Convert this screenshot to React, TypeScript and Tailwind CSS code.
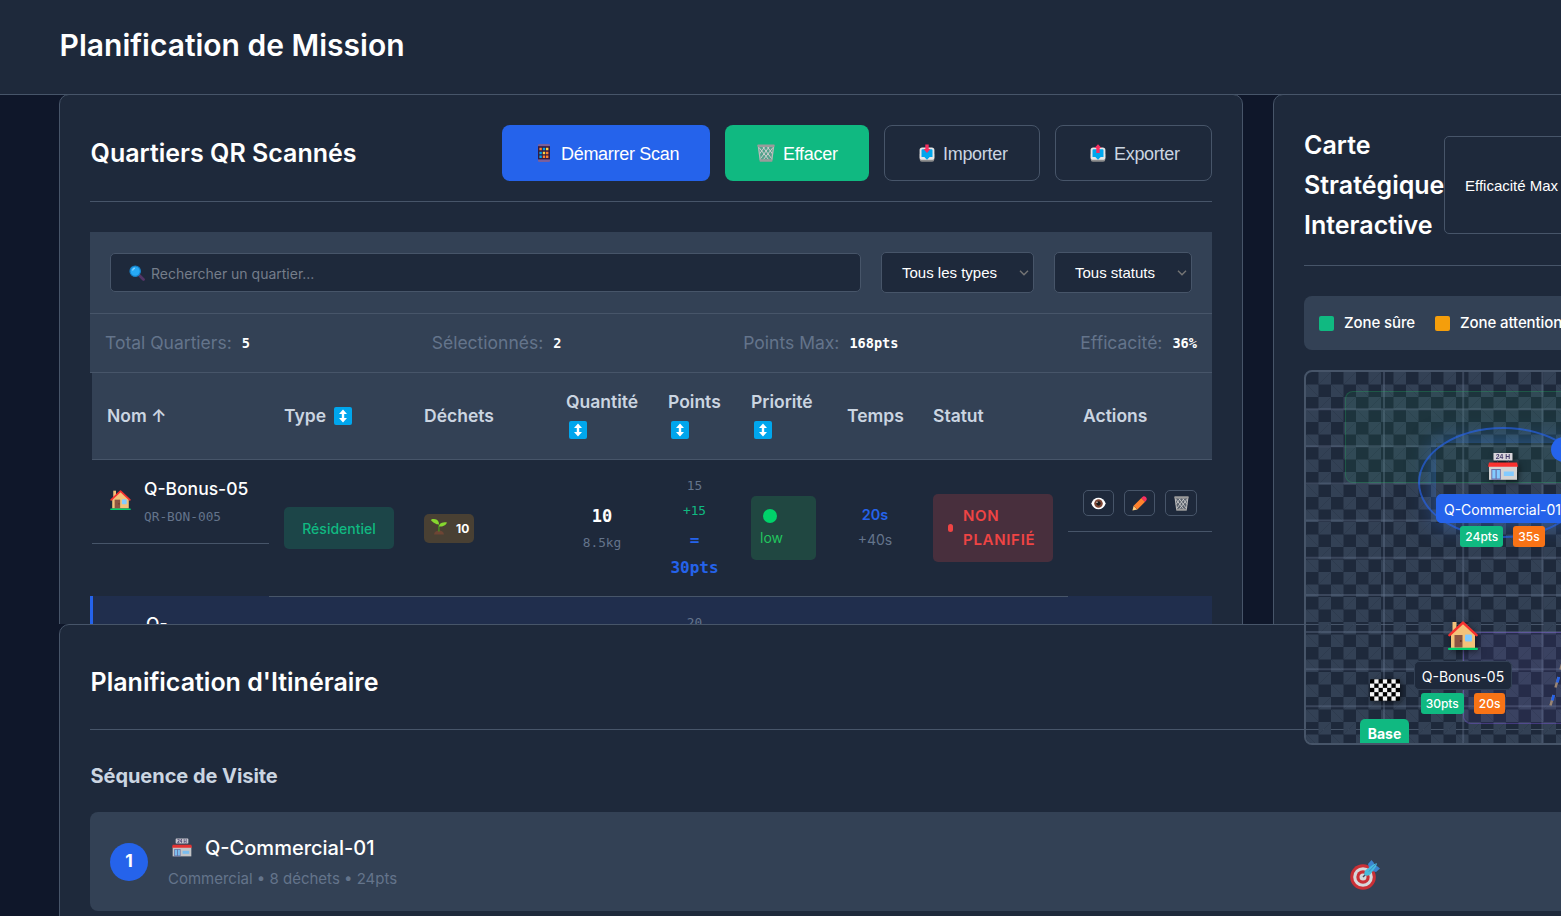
import type { ReactNode } from "react";

type IconProps = { className?: string };

function House({ className }: IconProps) {
  return (
    <svg viewBox="0 0 30 29" className={className}>
      <path d="M4.500 1h4v9h-4z" fill="#f3c27a" />
      <path d="M3 13 15 2l12 11v14H3z" fill="#f3c27a" />
      <path d="M1.500 14.200 15 1.600l13.500 12.600" fill="none" stroke="#f8312f" strokeWidth="2.500" strokeLinecap="round" strokeLinejoin="round" />
      <path d="M6.500 14h8v12.500h-8z" fill="#8b5542" />
      <circle cx="12.800" cy="20" r="0.900" fill="#5c2f22" />
      <rect x="17" y="13.500" width="7" height="7" rx="1" fill="#83cbff" />
      <rect x="0" y="26.800" width="30" height="2.100" rx="1" fill="#00d26a" />
    </svg>
  );
}

function Store({ className }: IconProps) {
  return (
    <svg viewBox="0 0 30 27" className={className}>
      <rect x="5.500" y="0" width="19" height="7.500" rx="0.600" fill="#d9d6dc" />
      <text x="15" y="6.200" textAnchor="middle" fontSize="6.800" fontWeight="700" fontFamily="Liberation Sans, sans-serif" fill="#433b6b">24 H</text>
      <path d="M9.500 7.500v2M20.500 7.500v2" stroke="#433b6b" strokeWidth="0.800" />
      <rect x="1" y="12" width="28" height="14.800" fill="#d3d3d3" />
      <path d="M1 9.500h28l1 4.300H0z" fill="#f8312f" />
      <rect x="3.300" y="16" width="9.500" height="10.800" fill="#6a6fa8" />
      <path d="M4.300 17h3.200v8.500H4.300zM8.700 17h3.200v8.500H8.700z" fill="#83cbff" />
      <rect x="15.800" y="18.500" width="10" height="4.500" fill="#83cbff" />
    </svg>
  );
}

function Magnifier({ className }: IconProps) {
  return (
    <svg viewBox="0 0 16 16" className={className}>
      <path d="m9.500 9.500 5 5" stroke="#533566" strokeWidth="2.800" strokeLinecap="round" />
      <circle cx="6.200" cy="6.200" r="5.200" fill="#26a9f5" stroke="#1680c7" strokeWidth="1.200" />
      <path d="M3.500 5.500c.3-1.300 1.200-2 2.400-2.300" stroke="#8ad4ff" strokeWidth="1.200" fill="none" />
    </svg>
  );
}

function Phone({ className }: IconProps) {
  return (
    <svg viewBox="0 0 12 18" className={className}>
      <rect width="12" height="18" rx="1.300" fill="#7a5f9c" />
      <rect y="2.200" width="12" height="13.200" fill="#321b41" />
      <path d="M1.400 3.800h2.400v2.400H1.400zM8 7.800h2.400v2.400H8zM4.800 11.500h2.400v2.400H4.800zM8 11.500h2.400v2.400H8z" fill="#ff822d" />
      <path d="M4.800 3.800h2.400v2.400H4.800zM1.400 7.800h2.400v2.400H1.400zM1.400 11.500h2.400v2.400H1.400z" fill="#00a6ed" />
      <path d="M8 3.800h2.400v2.400H8zM4.800 7.800h2.400v2.400H4.800z" fill="#fcd53f" />
    </svg>
  );
}

function Trash({ className }: IconProps) {
  return (
    <svg viewBox="0 0 18 18" className={className}>
      <path d="M1.300 2.500h15.400L15 16H3z" fill="#8b8f96" fillOpacity=".55" />
      <path d="m2 3.500 9.500 12M6 3l8.500 11.500M10.500 3l5 7M16 3.500 6.500 15.500M12 3 3.600 14.500M7.500 3l-5 7" stroke="#cfcfcf" strokeWidth="1" />
      <path d="m1.400 2.500 1.800 13.500M16.600 2.500l-1.800 13.500" stroke="#b9b9b9" strokeWidth="1.300" />
      <rect x="0.300" y="0.400" width="17.400" height="2.500" rx="0.800" fill="#9b9b9b" />
      <rect x="2.500" y="15.200" width="13" height="2.500" rx="0.900" fill="#9b9b9b" />
    </svg>
  );
}

function Tray({ className, up }: IconProps & { up?: boolean }) {
  return (
    <svg viewBox="0 0 16 18" className={className}>
      <path d="M.7 10v5.500A2.200 2.200 0 0 0 2.900 17.700h10.200a2.200 2.200 0 0 0 2.200-2.200V10z" fill="#8d8d8d" />
      <rect x="0.600" y="3.500" width="14.800" height="12.300" rx="2.600" fill="#e6e6e6" />
      <path d="M3.500 5.200h9a1 1 0 0 1 1 1V13h-2.800L8 15.800 5.300 13H2.500V6.200a1 1 0 0 1 1-1z" fill="#00a6ed" />
      {up ? (
        <path d="M8 .3 11.500 4H9.700v5H6.300V4H4.500z" fill="#f92f60" />
      ) : (
        <path d="M6.300.5h3.400V5h1.800L8 9 4.500 5h1.800z" fill="#f92f60" />
      )}
    </svg>
  );
}

function SortIcon({ className }: IconProps) {
  return (
    <svg viewBox="0 0 18 18" className={className}>
      <rect width="18" height="18" rx="2" fill="#00a6ed" />
      <path d="M9 2.500 13 7h-2.800v4H13l-4 4.500L5 11h2.800V7H5z" fill="#fff" />
    </svg>
  );
}

function Sprout({ className }: IconProps) {
  return (
    <svg viewBox="0 0 16 16" className={className}>
      <path d="M3 15.500c.5-3 2.500-4 5-4s4.500 1 5 4z" fill="#6d4534" />
      <path d="M7.900 12.500V6.500" stroke="#44911b" strokeWidth="1.400" />
      <path d="M8 5.500C6 5.500 4 5 .3 1.800-.1.300.8 0 3 .1 6.500.3 8 2.500 8 5.500z" fill="#86d72f" />
      <path d="M8 7.500c0-3 3-4.300 7.800-4.200C15.500 6 12 8 8 7.500z" fill="#86d72f" />
    </svg>
  );
}

function Eye({ className }: IconProps) {
  return (
    <svg viewBox="0 0 16 14" className={className}>
      <path d="M.3 7C1.500 2.800 4.500.8 8 .8s6.500 2 7.700 6.200C14.500 11.200 11.500 13.200 8 13.200S1.500 11.200.3 7z" fill="#fff" />
      <circle cx="8" cy="7" r="4.600" fill="#7d4533" />
      <circle cx="8" cy="7" r="2.300" fill="#1c1c1c" />
      <circle cx="6.400" cy="5.600" r="0.800" fill="#e8dcd8" />
    </svg>
  );
}

function Pencil({ className }: IconProps) {
  return (
    <svg viewBox="0 0 16 16" className={className}>
      <path d="m.5 15.500 1.200-5 4 3.800z" fill="#ffce7c" />
      <path d="M1.700 10.500 10 2.100l4 4-8.300 8.200z" fill="#ff822d" />
      <path d="M10 2.100c1.800-2.200 3.300-2.300 4.700-1 1.500 1.400 1.500 2.900-.7 5z" fill="#f92f60" />
    </svg>
  );
}

function Checkered({ className }: IconProps) {
  const cells: ReactNode[] = [];
  for (let r = 0; r < 5; r++)
    for (let c = 0; c < 7; c++)
      if ((r + c) % 2 === 1)
        cells.push(<rect key={r + "-" + c} x={c * 4.3} y={r * 4.3} width="4.3" height="4.3" fill="#f4f4f4" />);
  return (
    <svg viewBox="0 0 30.1 21.5" className={className}>
      <rect width="30.1" height="21.5" rx="1" fill="#000" />
      {cells}
    </svg>
  );
}

function Target({ className }: IconProps) {
  return (
    <svg viewBox="0 0 30 30" className={className}>
      <circle cx="13" cy="17" r="12.800" fill="#ca3036" />
      <circle cx="13" cy="17" r="9.800" fill="#d5d8db" />
      <circle cx="13" cy="17" r="6.700" fill="#ca3036" />
      <circle cx="13" cy="17" r="3.500" fill="#d5d8db" />
      <path d="m13 17 3-3" stroke="#3b4a66" strokeWidth="1.500" />
      <path d="M19.500 9.500 18 4l3.500-4 2.500 3-.5 3zM20.500 10.500l5.500 1.500 4-3.500-3-2.500-3.500.8z" fill="#3c85cf" />
      <path d="M14.500 15c-.5-2.500 0-4 1.500-5.200l8-5.800 3-.8-.8 3-5.700 8c-1.500 1.500-3.500 2-6 .8z" fill="#47bddc" />
      <path d="m19 11.500 7-7.500" stroke="#3c85cf" strokeWidth="1" />
    </svg>
  );
}

function Chevron() {
  return (
    <svg viewBox="0 0 10 6" className="h-[6px] w-[10px] shrink-0">
      <path d="m1 .8 4 4 4-4" fill="none" stroke="#757575" strokeWidth="1.400" />
    </svg>
  );
}

const mono = "font-['DejaVu_Sans_Mono',monospace]";
const tableCols = "grid grid-cols-[177px_140px_142px_102px_83px_96px_86px_150px_144px]";

function Button({ className, icon, children }: { className: string; icon: ReactNode; children: ReactNode }) {
  return (
    <button className={`flex h-14 shrink-0 items-center rounded-[8px] font-['Liberation_Sans',Arial,sans-serif] text-[18px] tracking-[-0.300px] whitespace-nowrap ${className}`}>
      {icon}
      <span className="pt-[2px]">{children}</span>
    </button>
  );
}

function Select({ className, children }: { className: string; children: ReactNode }) {
  return (
    <div className={`flex h-[41px] items-center justify-between rounded-[5px] border border-[#475569] bg-[#1e293b] pr-[4px] pl-5 font-['Liberation_Sans',Arial,sans-serif] text-[15px] text-white ${className}`}>
      <span className="pt-[2px]">{children}</span>
      <Chevron />
    </div>
  );
}

function Stat({ label, value }: { label: string; value: string }) {
  return (
    <div className="flex items-center gap-[10px]">
      <span className="text-[17.5px] text-[#64748b]">{label}</span>
      <span className={`text-[13.6px] font-bold text-white ${mono}`}>{value}</span>
    </div>
  );
}

function Th({ children, sort, stacked }: { children: ReactNode; sort?: boolean; stacked?: boolean }) {
  return (
    <div className={stacked ? "flex flex-col justify-center gap-0 pl-[15px] leading-7" : "flex items-center gap-2 pl-[15px]"}>
      <span>{children}</span>
      {sort && (
        <span className={stacked ? "flex h-7 items-center pl-[3px]" : "flex"}>
          <SortIcon className="size-[18px]" />
        </span>
      )}
    </div>
  );
}

function QuartiersCard() {
  return (
    <section className="h-[560px] w-[1184px] shrink-0 rounded-[10px] border border-[#475569] bg-[#1e293b] p-[30px]">
      <div className="flex items-center justify-between border-b border-[#475569] pb-5">
        <h2 className="pl-[0.600px] text-[25px] leading-[40px] font-semibold text-white">Quartiers QR Scannés</h2>
        <div className="flex gap-[15px]">
          <Button className="w-[208px] bg-[#2563eb] pl-9 text-white" icon={<Phone className="mr-[11px] h-[18px] w-3" />}>
            Démarrer Scan
          </Button>
          <Button className="w-36 bg-[#10b981] pl-8 text-white" icon={<Trash className="mr-[8px] size-[18px]" />}>
            Effacer
          </Button>
          <Button className="w-[156px] border border-[#475569] pl-[34px] text-[#cbd5e1]" icon={<Tray className="mr-[8px] h-[18px] w-4" />}>
            Importer
          </Button>
          <Button className="w-[157px] border border-[#475569] pl-[34px] text-[#cbd5e1]" icon={<Tray up className="mr-[8px] h-[18px] w-4" />}>
            Exporter
          </Button>
        </div>
      </div>

      <div className="mt-[30px] flex h-[82px] items-center gap-5 border-b border-[#475569] bg-[#334155] px-5">
        <div className="flex h-[39px] w-[751px] items-center gap-[6px] rounded-[5px] border border-[#475569] bg-[#1e293b] pl-[18px] text-[14px] text-[#757575]">
          <Magnifier className="size-4" />
          <span className="pt-px text-[#757d8a]">Rechercher un quartier...</span>
        </div>
        <Select className="w-[153px]">Tous les types</Select>
        <Select className="w-[138px]">Tous statuts</Select>
      </div>

      <div className="flex h-[59px] items-center justify-between border-b border-[#475569] bg-[#334155] pr-[15px] pl-[15px]">
        <Stat label="Total Quartiers:" value="5" />
        <Stat label="Sélectionnés:" value="2" />
        <Stat label="Points Max:" value="168pts" />
        <Stat label="Efficacité:" value="36%" />
      </div>

      <div className={`ml-[2px] h-[87px] border-b border-[#475569] bg-[#334155] text-[17.5px] font-semibold text-[#cbd5e1] ${tableCols}`}>
        <Th>Nom ↑</Th>
        <Th sort>Type</Th>
        <Th>Déchets</Th>
        <Th sort stacked>Quantité</Th>
        <Th sort stacked>Points</Th>
        <Th sort stacked>Priorité</Th>
        <Th>Temps</Th>
        <Th>Statut</Th>
        <Th>Actions</Th>
      </div>

      <div className={`ml-[2px] h-[136px] items-start ${tableCols}`}>
        <div className="flex h-[84px] gap-[13px] border-b border-[#475569] pl-[18px]">
          <House className="mt-[30px] h-5 w-[21px]" />
          <div className="flex flex-col pt-[15px]">
            <span className="text-[17.5px] leading-7 font-medium text-white">Q-Bonus-05</span>
            <span className={`text-[12.8px] leading-7 text-[#64748b] ${mono}`}>QR-BON-005</span>
          </div>
        </div>
        <div className="flex h-[136px] items-center pl-[15px]">
          <span className="flex h-[42px] w-[110px] items-center justify-center rounded-[5px] bg-[#1c4548] text-[14px] font-medium text-[#10b981]">Résidentiel</span>
        </div>
        <div className="flex h-[136px] items-center pl-[15px]">
          <span className="flex h-[29px] w-[50px] items-center gap-[9px] rounded-[5px] bg-[#494033] pl-[7px] text-[12px] font-bold text-white">
            <Sprout className="mb-[2px] size-4" />
            <span className="pt-px">10</span>
          </span>
        </div>
        <div className={`flex flex-col items-center pt-[42px] ${mono}`}>
          <span className="text-[17px] leading-7 font-bold text-white">10</span>
          <span className="text-[12.8px] leading-[26px] text-[#64748b]">8.5kg</span>
        </div>
        <div className={`flex flex-col items-center pt-[13px] ${mono}`}>
          <span className="text-[12.8px] leading-[25px] text-[#64748b]">15</span>
          <span className="text-[12.8px] leading-[25px] text-[#10b981]">+15</span>
          <span className="mt-[3px] text-[16px] leading-7 font-bold text-[#2563eb]">=</span>
          <span className="text-[16px] leading-7 font-bold text-[#2563eb]">30pts</span>
        </div>
        <div className="flex h-[136px] items-center pl-[15px]">
          <div className="flex h-16 w-[65px] flex-col justify-center rounded-[5px] bg-[#204741] pl-[9px] text-[14px] text-[#22c55e]">
            <span className="mt-[2px] ml-[3px] size-[14px] rounded-full bg-[#00d26a]" />
            <span className="mt-[3px] leading-6">low</span>
          </div>
        </div>
        <div className="flex flex-col items-center pt-[42px] text-[14px] leading-[25px]">
          <span className="text-[14.4px] font-semibold text-[#2563eb]">20s</span>
          <span className="text-[#64748b]">+40s</span>
        </div>
        <div className="flex h-[136px] items-center pl-[15px]">
          <div className="flex h-[68px] w-[120px] items-center rounded-[5px] bg-[#482f3d] pl-[15px] text-[15px] leading-6 font-semibold tracking-[0.700px] text-[#ef4444]">
            <span className="mr-[10px] h-2 w-[5px] shrink-0 rounded-full bg-[#ef4444]" />
            <span className="w-20">NON PLANIFIÉ</span>
          </div>
        </div>
        <div className="flex h-[72px] items-start gap-[10px] border-b border-[#475569] pt-[30px] pl-[15px]">
          <button className="flex h-[26px] w-[31px] items-center justify-center rounded-[5px] border border-[#475569]">
            <Eye className="h-[13px] w-[15px]" />
          </button>
          <button className="flex h-[26px] w-[31px] items-center justify-center rounded-[5px] border border-[#475569]">
            <Pencil className="size-[15px]" />
          </button>
          <button className="flex h-[26px] w-8 items-center justify-center rounded-[5px] border border-[#475569]">
            <Trash className="size-[15px]" />
          </button>
        </div>
      </div>

      <div className="flex h-[136px] border-l-[3px] border-[#2563eb] bg-[#202e4d]">
        <div className="w-44 pt-[14px] pl-[53px] text-[17.5px] leading-7 font-medium text-white">Q-</div>
        <div className={`flex w-[799px] items-start border-t border-[#475569] pt-[13px] pl-[384px] text-[#64748b] ${mono}`}>
          <span className="w-[83px] text-center text-[12.8px] leading-[25px]">20</span>
        </div>
      </div>
    </section>
  );
}

function Marker({ label, points, time, selected }: { label: string; points: string; time: string; selected?: boolean }) {
  return (
    <>
      <span className={`flex h-[29px] items-center justify-center rounded-[5px] border px-[7px] pt-px text-[14px] whitespace-nowrap text-white ${selected ? "border-[#2563eb] bg-[#2563eb]" : "border-[#334155] bg-[#1e293b]"}`}>
        {label}
      </span>
      <div className="mt-[3px] flex justify-center gap-[10px] text-[12px] font-medium text-white">
        <span className="flex h-[21px] items-center rounded-[3px] bg-[#10b981] px-[5px] pt-px">{points}</span>
        <span className="flex h-[21px] items-center rounded-[3px] bg-[#f97316] px-[5px] pt-px">{time}</span>
      </div>
    </>
  );
}

function StrategicMap() {
  return (
    <div className="relative z-10 mt-5 h-[375px] w-[796px] overflow-hidden rounded-[8px] border-2 border-[#475569]">
      <div className="absolute inset-0 bg-[linear-gradient(45deg,#334155_25%,transparent_25%),linear-gradient(-45deg,#334155_25%,transparent_25%),linear-gradient(45deg,transparent_75%,#334155_75%),linear-gradient(-45deg,transparent_75%,#334155_75%)] bg-[length:25px_25px] bg-[position:0_0,0_12.5px,12.5px_-12.5px,-12.5px_0]" />
      <svg className="absolute inset-0 h-full w-full" viewBox="0 0 792 371">
        <g stroke="#64748b" strokeOpacity="0.4" strokeWidth="2">
          {[1, 2, 3, 4, 5, 6, 7, 8, 9].map((n) => (
            <path key={n} d={`M0 ${n * 37.15}H792M${n * 79.2 - 1.2} 0V371`} />
          ))}
        </g>
      </svg>
      <div className="absolute top-[19px] left-[39px] h-[92px] w-[240px] rounded-[8px] border border-[#22c55e]/25 bg-[#22c55e]/7" />
      <div className="absolute top-[260px] left-[157px] h-[92px] w-[240px] rounded-[8px] border border-[#8b5cf6]/30 bg-[#8b5cf6]/8" />
      <svg className="absolute inset-0 h-full w-full" viewBox="0 0 792 371">
        <path d="m247.500 323-3 10.500M252.500 305l-3 10.500M257.500 287l-3 10.500" stroke="#9a8574" strokeWidth="2.500" />
        <path d="m247.800 323-1.500 5.500M252.800 305l-1.500 5.500M257.800 287l-1.500 5.500" stroke="#2563eb" strokeWidth="2.800" />
      </svg>

      <div className="absolute top-[71px] left-[130px] h-20 w-[133px] shadow-[0_0_22px_rgba(59,130,246,0.5)]" />
      <div className="absolute top-[55px] left-[112px] h-[111px] w-[170px] rounded-[50%] border-2 border-[#2563eb]/65" />
      <div className="absolute top-[81px] left-[130px] flex w-[133px] flex-col items-center">
        <Store className="mb-[14px] h-[27px] w-[30px] drop-shadow-[2px_2px_3px_rgba(0,0,0,0.5)]" />
        <Marker label="Q-Commercial-01" points="24pts" time="35s" selected />
      </div>
      <div className="absolute top-[65px] left-[245px] flex size-[25px] items-center justify-center rounded-full bg-[#2563eb] text-[13px] font-bold text-white">1</div>

      <div className="absolute top-[249px] left-[107px] flex w-[100px] flex-col items-center">
        <House className="mb-[11px] h-[29px] w-[30px] drop-shadow-[2px_2px_3px_rgba(0,0,0,0.5)]" />
        <Marker label="Q-Bonus-05" points="30pts" time="20s" />
      </div>

      <div className="absolute top-[307px] left-[54px] flex w-[49px] flex-col items-center">
        <Checkered className="h-[22px] w-[30px] drop-shadow-[2px_2px_3px_rgba(0,0,0,0.5)]" />
        <span className="mt-[18px] flex h-[29px] w-[49px] items-center justify-center rounded-[5px] bg-[#10b981] text-[14px] font-bold text-white">Base</span>
      </div>
    </div>
  );
}

function MapCard() {
  return (
    <section className="h-[560px] w-[858px] shrink-0 rounded-[10px] border border-[#475569] bg-[#1e293b] p-[30px]">
      <div className="flex items-center border-b border-[#475569] pb-5">
        <h2 className="w-[140px] text-[25px] leading-10 font-semibold text-white">Carte Stratégique Interactive</h2>
        <div className="flex h-[98px] w-[200px] shrink-0 items-center rounded-[5px] border border-[#475569] pt-[2px] pl-5 font-['Liberation_Sans',Arial,sans-serif] text-[15px] text-white">
          Efficacité Max
        </div>
      </div>
      <div className="mt-[30px] flex h-[54px] items-center gap-5 rounded-[8px] bg-[#334155] pl-[15px] text-[15px] font-medium tracking-[-0.100px] text-white">
        <span className="flex items-center gap-[10px]">
          <i className="size-[15px] rounded-[2px] bg-[#10b981]" />
          Zone sûre
        </span>
        <span className="flex items-center gap-[10px]">
          <i className="size-[15px] rounded-[2px] bg-[#f59e0b]" />
          Zone attention
        </span>
      </div>
      <StrategicMap />
    </section>
  );
}

function Itinerary() {
  return (
    <section className="ml-[59px] h-[400px] w-[2072px] rounded-[10px] border border-[#475569] bg-[#1e293b] p-[30px]">
      <div className="flex h-[75px] items-start border-b border-[#475569]">
        <h2 className="pl-[0.600px] text-[25px] leading-[54px] font-semibold text-white">Planification d'Itinéraire</h2>
      </div>
      <h3 className="mt-[30px] pl-[0.500px] text-[20px] leading-8 font-bold tracking-[-0.050px] text-[#cbd5e1]">Séquence de Visite</h3>
      <div className="mt-5 flex h-[99px] items-center rounded-[8px] bg-[#334155] pl-5">
        <span className="flex size-[38px] shrink-0 items-center justify-center rounded-full bg-[#2563eb] text-[17.5px] font-bold text-white">1</span>
        <div className="ml-5 flex w-[1182px] flex-col">
          <div className="flex h-8 items-center pl-[4px] text-[20px] font-medium text-white">
            <Store className="mr-[13px] mb-[2px] h-[19px] w-5 opacity-90" />
            Q-Commercial-01
          </div>
          <span className="mt-[3px] text-[15px] leading-6 text-[#64748b]">Commercial • 8 déchets • 24pts</span>
        </div>
        <Target className="mt-[26px] size-[30px]" />
      </div>
    </section>
  );
}

export default function App() {
  return (
    <div className="h-[916px] w-[1561px] overflow-hidden bg-[#0f172a] font-[Inter,sans-serif]">
      <header className="flex h-[95px] border-b border-[#475569] bg-[#1e293b] pl-[59.600px]">
        <h1 className="text-[30px] leading-[90px] font-semibold text-white">Planification de Mission</h1>
      </header>
      <main>
        <div className="-mt-px flex h-[530px] gap-[30px] pl-[59px]">
          <div className="h-[530px] shrink-0 overflow-hidden">
            <QuartiersCard />
          </div>
          <MapCard />
        </div>
        <div className="relative">
          <Itinerary />
        </div>
      </main>
    </div>
  );
}
